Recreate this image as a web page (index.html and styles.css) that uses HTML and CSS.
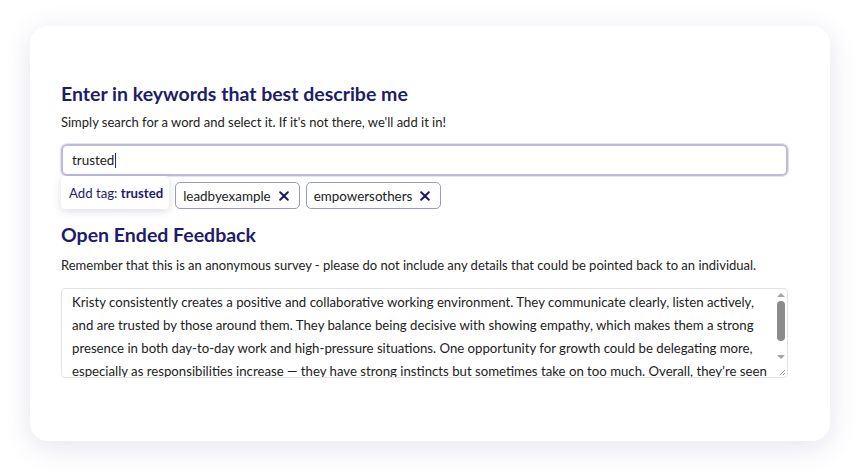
FILE: index.html
```html
<!DOCTYPE html>
<html lang="en">
<head>
<meta charset="utf-8">
<title>Survey</title>
<link rel="stylesheet" href="styles.css">
</head>
<body>
<main class="card">
  <section class="block">
    <h2 class="title">Enter in keywords that best describe me</h2>
    <p class="hint">Simply search for a word and select it. If it's not there, we'll add it in!</p>
    <div class="search"><span class="typed">trusted</span><span class="caret"></span></div>
    <div class="tag-row">
      <div class="suggest">Add tag: <b>trusted</b></div>
      <span class="tag">leadbyexample <svg class="x" width="10" height="10" viewBox="0 0 10 10"><path d="M1.2 1.2 L8.8 8.8 M8.8 1.2 L1.2 8.8" stroke="#1e1c6b" stroke-width="2" stroke-linecap="round" fill="none"/></svg></span>
      <span class="tag">empowersothers <svg class="x" width="10" height="10" viewBox="0 0 10 10"><path d="M1.2 1.2 L8.8 8.8 M8.8 1.2 L1.2 8.8" stroke="#1e1c6b" stroke-width="2" stroke-linecap="round" fill="none"/></svg></span>
    </div>
  </section>
  <section class="block second">
    <h2 class="title">Open Ended Feedback</h2>
    <p class="hint">Remember that this is an anonymous survey - please do not include any details that could be pointed back to an individual.</p>
    <div class="area-wrap">
      <textarea class="feedback">Kristy consistently creates a positive and collaborative working environment. They communicate clearly, listen actively, and are trusted by those around them. They balance being decisive with showing empathy, which makes them a strong presence in both day-to-day work and high-pressure situations. One opportunity for growth could be delegating more, especially as responsibilities increase — they have strong instincts but sometimes take on too much. Overall, they’re seen as a dependable leader who brings out the best in the people around them, and the team would benefit from more of their guidance.</textarea>
      <div class="scrollbar">
        <span class="arrow up"></span>
        <span class="thumb"></span>
        <span class="arrow down"></span>
      </div>
      <svg class="grip" width="8" height="8" viewBox="0 0 8 8"><path d="M7 2 L2 7 M7 5 L5 7" stroke="#9a9a9a" stroke-width="1" fill="none"/></svg>
    </div>
  </section>
</main>
</body>
</html>
```

FILE: styles.css
```css
* { box-sizing: border-box; }
html, body { margin: 0; padding: 0; background: #ffffff; }
body {
  font-family: Lato, "Open Sans", sans-serif;
  color: #222;
  padding: 26px 30px 34px 30px;
}
.card {
  background: #fff;
  border-radius: 18px;
  box-shadow: 0 6px 28px rgba(90, 90, 150, 0.16);
  height: 415px;
  padding: 57px 42px 0 31px;
}
.title {
  margin: 0;
  font-size: 19.5px;
  font-weight: 700;
  color: #1e1c6b;
  line-height: 22px;
}
.hint {
  margin: 9px 0 0 0;
  font-size: 13px;
  line-height: 16px;
  color: #222;
}
.search {
  margin-top: 14px;
  height: 32px;
  border: 2px solid #bcbcd8;
  border-radius: 6px;
  box-shadow: 0 0 0 1px #e4e4f1;
  display: flex;
  align-items: center;
  padding-left: 9px;
  font-size: 13.4px;
  color: #222;
}
.caret { width: 1px; height: 15px; background: #333; margin-left: 1px; }
.tag-row {
  display: flex;
  align-items: flex-start;
  gap: 6px;
}
.suggest {
  height: 33px;
  padding: 0 6px 0 8px;
  display: flex;
  align-items: center;
  background: #fff;
  border-radius: 4px;
  box-shadow: 0 2px 8px rgba(60, 60, 110, 0.18);
  font-size: 13.2px;
  color: #1e1c6b;
  white-space: pre;
}
.suggest b { font-weight: 700; }
.tag {
  margin-top: 6px;
  height: 27px;
  display: inline-flex;
  align-items: center;
  gap: 8px;
  padding: 0 10px 0 7px;
  border: 1px solid #9a9ac6;
  border-radius: 5px;
  font-size: 13.4px;
  color: #222;
}
.x { display: block; }
.second { margin-top: 15px; }
.second .hint { margin-top: 11px; }
.area-wrap {
  position: relative;
  margin-top: 15px;
  width: 727px;
  height: 90px;
}
.feedback {
  display: block;
  width: 100%;
  height: 100%;
  border: 1px solid #e2e2e6;
  border-radius: 4px;
  padding: 2px 17px 2px 10px;
  font-family: Lato, "Open Sans", sans-serif;
  font-size: 13.2px;
  line-height: 23px;
  color: #222;
  resize: none;
  overflow: hidden;
}
.scrollbar {
  position: absolute;
  top: 1px;
  right: 1px;
  width: 12px;
  height: 75px;
  display: flex;
  flex-direction: column;
  align-items: center;
}
.arrow {
  width: 0;
  height: 0;
  border-left: 4px solid transparent;
  border-right: 4px solid transparent;
}
.arrow.up { margin-top: 4px; border-bottom: 4px solid #a3a3a3; }
.arrow.down { margin-top: 14px; border-top: 4px solid #a3a3a3; }
.thumb {
  margin-top: 4px;
  width: 8px;
  height: 40px;
  border-radius: 4px;
  background: #8c8c8c;
}
.grip {
  position: absolute;
  right: 2px;
  bottom: 2px;
}
```
